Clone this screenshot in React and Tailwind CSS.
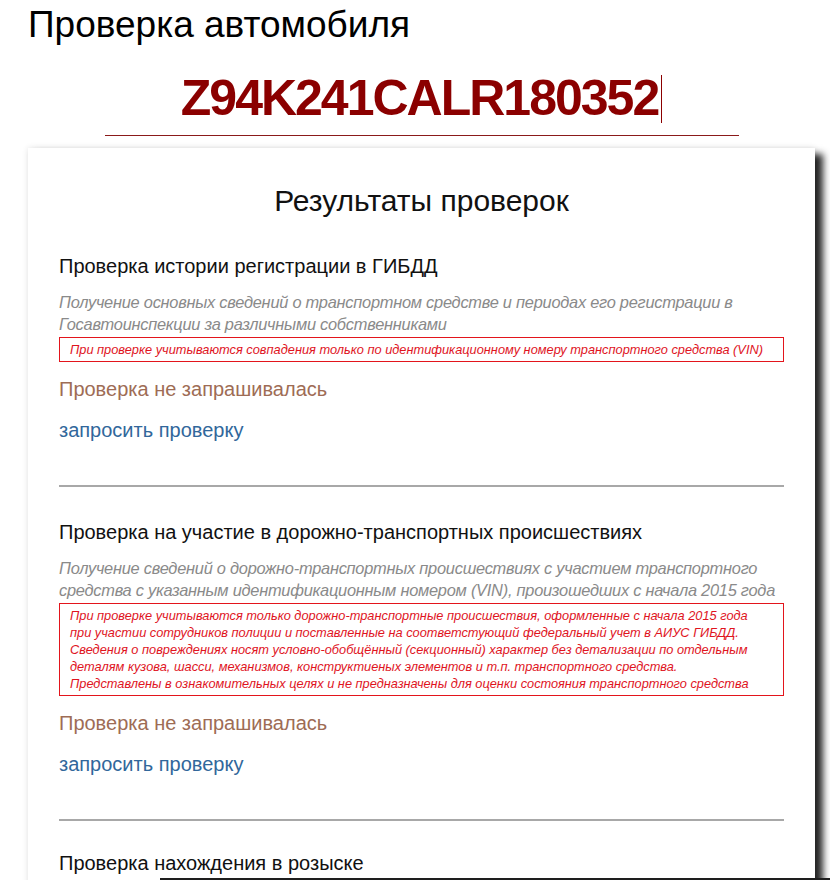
import React from 'react';

const checks = [
  {
    title: 'Проверка истории регистрации в ГИБДД',
    desc: [
      'Получение основных сведений о транспортном средстве и периодах его регистрации в',
      'Госавтоинспекции за различными собственниками',
    ],
    note: [
      'При проверке учитываются совпадения только по идентификационному номеру транспортного средства (VIN)',
    ],
  },
  {
    title: 'Проверка на участие в дорожно-транспортных происшествиях',
    desc: [
      'Получение сведений о дорожно-транспортных происшествиях с участием транспортного',
      'средства с указанным идентификационным номером (VIN), произошедших с начала 2015 года',
    ],
    note: [
      'При проверке учитываются только дорожно-транспортные происшествия, оформленные с начала 2015 года',
      'при участии сотрудников полиции и поставленные на соответстующий федеральный учет в АИУС ГИБДД.',
      'Сведения о повреждениях носят условно-обобщённый (секционный) характер без детализации по отдельным',
      'деталям кузова, шасси, механизмов, конструктиеных элементов и т.п. транспортного средства.',
      'Представлены в ознакомительных целях и не предназначены для оценки состояния транспортного средства',
    ],
  },
];

function CheckSection({ check }) {
  return (
    <section className="pt-[31px]">
      <h3 className="h-[28px] text-[20px] leading-[28px] text-[#111]">{check.title}</h3>
      <p className="mt-[11px] text-[16.4px] leading-[22px] italic tracking-[-0.25px] whitespace-nowrap text-[#8a8a8a]">
        {check.desc.map((line) => (
          <span key={line} className="block h-[22px]">{line}</span>
        ))}
      </p>
      <div className="mt-[2px] border border-[#e3151c] px-[10px] py-[3px] text-[12.8px] leading-[17px] italic whitespace-nowrap text-[#e0141e]">
        {check.note.map((line) => (
          <div key={line} className="h-[17px]">{line}</div>
        ))}
      </div>
      <p className="mt-[13px] h-[28px] text-[20px] leading-[28px] text-[#9e6c55]">
        Проверка не запрашивалась
      </p>
      <a href="#" className="mt-[13px] block h-[28px] text-[20px] leading-[28px] text-[#31679b]">
        запросить проверку
      </a>
      <hr className="mt-[41px] border-0 border-t-2 border-[#a8a8a8]" />
    </section>
  );
}

export default function App() {
  return (
    <div className="relative h-[880px] overflow-hidden bg-white font-['Liberation_Sans',Arial,sans-serif]">
      <div className="ml-[28px] w-[787px]">
        <h1 className="h-[48px] pt-[2px] text-[37px] leading-[46px] text-black">
          Проверка автомобиля
        </h1>
        <div className="mx-auto mt-[21px] flex h-[67px] w-[634px] items-start justify-center border-b border-[#8b1a1a]">
          <span className="text-[50px] font-bold leading-[58px] tracking-[-2px] text-[#8b0000]">
            Z94K241CALR180352
          </span>
          <span className="mt-[6px] ml-[3px] h-[48px] w-px bg-[#8b0000]" />
        </div>
        <div className="mt-[12px] bg-white px-[31px] pt-[33px] pb-[40px] shadow-[8px_6px_7px_rgba(0,0,0,0.85),0_0_6px_rgba(0,0,0,0.12)]">
          <h2 className="h-[40px] text-center text-[30px] leading-[40px] text-[#111]">Результаты проверок</h2>
          {checks.map((c) => (
            <CheckSection key={c.title} check={c} />
          ))}
          <section className="pt-[28px]">
            <h3 className="text-[20px] leading-[28px] text-[#111]">Проверка нахождения в розыске</h3>
          </section>
        </div>
      </div>
      <div className="absolute bottom-0 left-[160px] right-0 h-[2px] bg-[#1e1e1e]" />
    </div>
  );
}
